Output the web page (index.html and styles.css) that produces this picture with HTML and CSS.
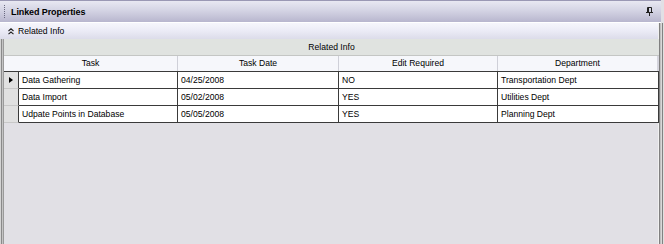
FILE: index.html
```html
<!DOCTYPE html>
<html>
<head>
<meta charset="utf-8">
<link rel="stylesheet" href="styles.css">
</head>
<body>
<div class="window">
  <div class="titlebar">
    <span class="grip"></span>
    <span class="title">Linked Properties</span>
    <svg class="pin" width="7" height="9" viewBox="0 0 7 9">
      <path d="M1.5 0.5h4v5h-4z M2.5 1v4" fill="none" stroke="#202020" stroke-width="1"/>
      <path d="M0 5.5h7" stroke="#202020" stroke-width="1"/>
      <path d="M3.5 6v3" stroke="#202020" stroke-width="1"/>
    </svg>
  </div>
  <div class="body">
    <div class="sectionbar">
      <svg class="chev" width="6" height="7" viewBox="0 0 6 7">
        <path d="M0.5 3L3 0.8L5.5 3 M0.5 6.2L3 4L5.5 6.2" fill="none" stroke="#222" stroke-width="1.1"/>
      </svg>
      <span>Related Info</span>
    </div>
    <div class="panel">
      <div class="band">Related Info</div>
      <div class="headers">
        <div class="h">Task</div>
        <div class="h">Task Date</div>
        <div class="h">Edit Required</div>
        <div class="h last">Department</div>
      </div>
      <div class="rows">
        <div class="row">
          <div class="rh"><span class="tri"></span></div>
          <div class="c">Data Gathering</div>
          <div class="c">04/25/2008</div>
          <div class="c">NO</div>
          <div class="c">Transportation Dept</div>
        </div>
        <div class="row">
          <div class="rh"></div>
          <div class="c">Data Import</div>
          <div class="c">05/02/2008</div>
          <div class="c">YES</div>
          <div class="c">Utilities Dept</div>
        </div>
        <div class="row">
          <div class="rh"></div>
          <div class="c">Udpate Points in Database</div>
          <div class="c">05/05/2008</div>
          <div class="c">YES</div>
          <div class="c">Planning Dept</div>
        </div>
      </div>
    </div>
  </div>
</div>
</body>
</html>
```
FILE: styles.css
```css
html, body {
  margin: 0;
  padding: 0;
}
body {
  width: 664px;
  height: 244px;
  overflow: hidden;
  background: #e1e0e5;
  font-family: "Liberation Sans", Arial, sans-serif;
  font-size: 8.6px;
  color: #000;
}
.window {
  width: 664px;
  height: 244px;
  display: flex;
  flex-direction: column;
}
.titlebar {
  height: 21px;
  border-top: 1px solid #9a98b4;
  border-bottom: 1px solid #ffffff;
  background: linear-gradient(to bottom, #e8e8f2 0%, #d4d4e4 45%, #b8b6ce 100%);
  display: flex;
  align-items: center;
  padding: 0 8px 0 4px;
  margin-right: 3px;
}
.grip {
  width: 1px;
  height: 13px;
  background: repeating-linear-gradient(to bottom, #6a6a80 0 1px, transparent 1px 2px);
  margin-right: 6px;
}
.title {
  font-weight: bold;
  font-size: 9px;
  flex: 1;
  letter-spacing: -0.1px;
}
.pin {
  display: block;
  margin-top: -1px;
}
.body {
  flex: 1;
  display: flex;
  flex-direction: column;
  background:
    linear-gradient(to right, #d4d4d4 0 1px, #8a8a8a 1px 2px, #c4c4c4 2px 3px, #9a9a9a 3px 4px, transparent 4px),
    linear-gradient(to left, #e0e0e0 0 1px, #828282 1px 2px, #d8d8d8 2px 3px, #c0c0c0 3px 4px, #808080 4px 5px, #f0f0f0 5px 6px, transparent 6px),
    #e1e0e5;
}
.sectionbar {
  height: 16px;
  margin-right: 6px;
  background: linear-gradient(to bottom, #f6f6fc 0%, #ebebf6 50%, #dcdcea 100%);
  display: flex;
  align-items: center;
  padding-left: 8px;
  gap: 4px;
}
.chev {
  display: block;
}
.panel {
  margin: 0 5px 0 4px;
}
.band {
  height: 16px;
  line-height: 16px;
  background: #e0e3e0;
  border-bottom: 1px solid #c4c6c4;
  text-align: center;
}
.headers {
  height: 15px;
  display: grid;
  grid-template-columns: 174px 161px 159px 161px;
  background: #f6f7fb;
}
.h {
  line-height: 15px;
  text-align: center;
  border-right: 1px solid #cfd0d8;
}
.h.last {
  border-right: 2px solid #d4d4dc;
}
.rows {
  border-top: 1px solid #3a3a3a;
}
.row {
  display: grid;
  grid-template-columns: 15px 159px 161px 159px 161px;
  height: 17px;
}
.rh {
  background: #e1e1e1;
  border-bottom: 1px solid #c8c8c8;
  border-right: 1px solid #3a3a3a;
  position: relative;
}
.tri {
  position: absolute;
  left: 5px;
  top: 5px;
  width: 0;
  height: 0;
  border-top: 3.5px solid transparent;
  border-bottom: 3.5px solid transparent;
  border-left: 4px solid #000;
}
.c {
  background: #ffffff;
  border-right: 1px solid #3a3a3a;
  border-bottom: 1px solid #3a3a3a;
  padding-left: 3px;
  line-height: 16px;
  white-space: nowrap;
  overflow: hidden;
}
```
